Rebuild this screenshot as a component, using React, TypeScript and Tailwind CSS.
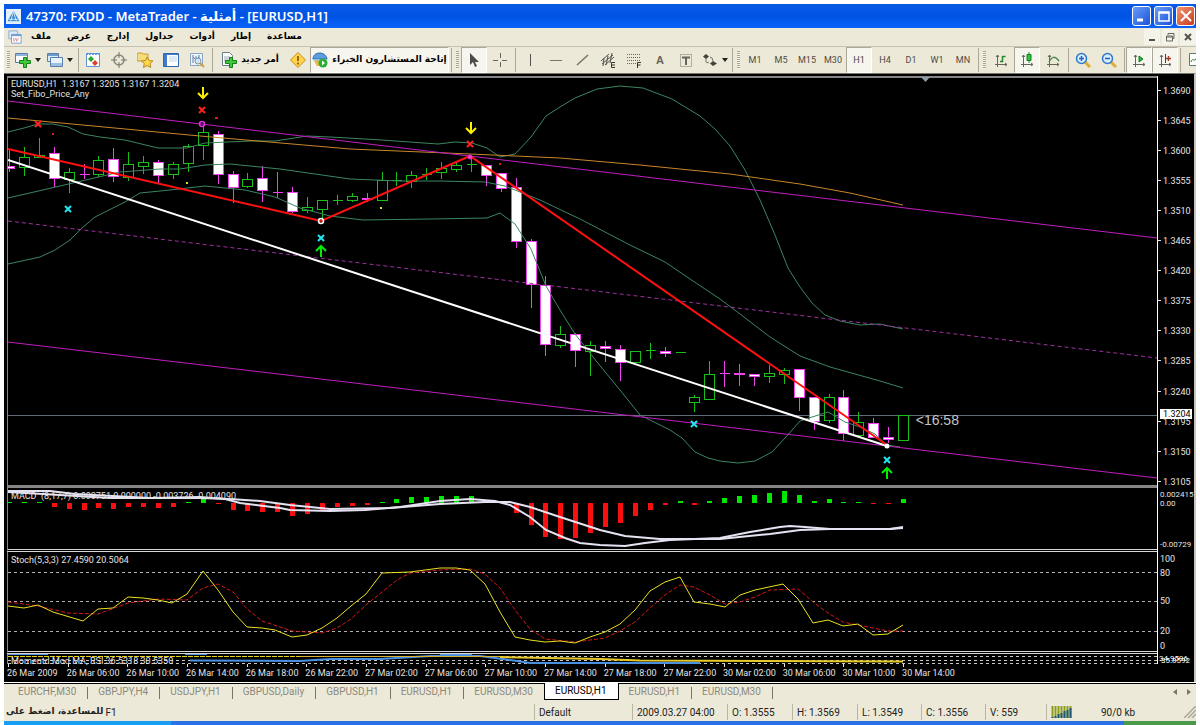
import type { ReactNode } from 'react'
import clsx from 'clsx'

type Side = 'up' | 'down'
// side, high, body top, body bottom, low
type Candle = [Side, number, number, number, number]

const CANDLES: Candle[] = [
  ['down', 150, 166, 168, 172], ['up', 147, 157, 167, 176], ['up', 138, 155, 157, 157], ['down', 147, 153, 178, 187],
  ['up', 168, 172, 179, 193], ['down', 164, 174, 174, 179], ['up', 156, 160, 174, 177], ['down', 148, 159, 176, 182],
  ['up', 152, 164, 177, 181], ['up', 156, 162, 166, 174], ['down', 160, 162, 175, 184], ['up', 162, 164, 174, 179],
  ['up', 144, 146, 163, 172], ['up', 125, 132, 145, 160], ['down', 131, 134, 174, 184], ['down', 171, 174, 187, 203],
  ['up', 173, 179, 186, 188], ['down', 166, 178, 190, 202], ['down', 172, 192, 192, 198], ['down', 187, 192, 211, 213],
  ['up', 197, 207, 210, 213], ['up', 200, 200, 209, 220], ['up', 195, 200, 200, 205], ['up', 193, 196, 200, 202],
  ['down', 193, 198, 199, 202], ['up', 172, 180, 200, 200], ['up', 172, 180, 180, 186], ['up', 171, 175, 181, 188],
  ['up', 168, 174, 174, 180], ['up', 162, 168, 172, 179], ['up', 163, 165, 169, 172], ['up', 158, 164, 164, 172],
  ['down', 165, 165, 175, 186], ['down', 173, 173, 188, 192], ['down', 178, 187, 241, 248], ['down', 239, 241, 284, 308],
  ['down', 276, 285, 344, 356], ['up', 326, 334, 345, 348], ['down', 333, 334, 350, 367], ['up', 341, 345, 351, 376],
  ['down', 341, 346, 348, 362], ['down', 345, 349, 362, 381], ['up', 351, 351, 362, 362], ['up', 343, 350, 350, 359],
  ['down', 347, 351, 353, 357], ['up', 352, 352, 352, 352], ['up', 395, 397, 402, 412], ['up', 361, 374, 399, 399],
  ['down', 361, 373, 373, 387], ['down', 364, 373, 374, 386], ['down', 374, 374, 376, 386], ['up', 365, 373, 376, 383],
  ['up', 368, 370, 374, 384], ['down', 369, 369, 397, 411], ['down', 397, 397, 421, 430], ['up', 394, 397, 420, 423],
  ['down', 390, 397, 433, 441], ['up', 412, 422, 435, 435], ['down', 418, 423, 437, 437], ['down', 427, 437, 439, 443],
  ['up', 415, 415, 440, 440],
]

const MACD_ZERO = 503
// end of each histogram bar; below the zero line is red
const MACD_BARS = [
  502, 502, 502, 507, 509, 510, 508, 509, 507, 507, 508, 507, 502, 498, 504, 510, 511, 512, 512, 516, 514, 511, 507, 506,
  505, 502, 499, 497, 497, 496, 496, 496, 503, 503, 513, 525, 537, 539, 538, 533, 527, 523, 516, 510, 505, 501, 505, 501,
  498, 496, 495, 493, 491, 495, 501, 499, 502, 502, 504, 504, 499,
]

const UPPER_BAND = '8,132 24,128 38,124 53,124 68,127 83,134 100,137 125,140 158,148 187,148 205,143 250,141 275,141 307,136 330,137 382,140 438,144 455,142 472,143 487,148 500,157 515,154 531,137 546,116 560,107 575,98 597,89 620,86 643,88 672,99 700,116 715,129 730,146 745,170 760,200 775,235 788,268 800,287 812,303 825,315 840,321 860,325 880,324 903,329'
const MIDDLE_BAND = '8,198 60,186 120,172 160,169 180,169 205,165 230,164 280,169 350,179 400,181 440,181 485,182 505,186 540,200 580,219 630,245 665,262 690,279 720,299 740,314 770,337 800,356 830,367 880,381 903,388'
const LOWER_BAND = '8,264 40,257 55,250 70,240 82,228 95,217 125,202 140,193 170,190 205,186 245,190 275,197 300,208 330,216 363,220 430,219 487,218 500,213 515,224 531,249 546,286 560,310 575,334 597,362 620,390 640,415 670,430 682,438 695,452 708,458 720,461 738,463 755,461 772,452 785,438 800,421 812,417 828,412 845,422 860,427 875,434 887,445 900,447'
const SLOW_MA = '8,118 200,136 350,149 470,154 560,158 640,165 730,174 800,184 850,193 903,205'
const MACD_MAIN = '8,491 50,491 75,494 150,498 200,497 225,499 240,503 280,508 290,510 330,511 365,510 400,507 440,501 470,499 495,501 510,505 530,517 546,530 565,538 580,543 600,545 625,546 645,543 670,540 720,538 750,532 780,527 790,526 805,527 830,529 890,529 903,527'
const MACD_SIGNAL = '8,492 60,495 110,498 200,498 230,499 260,501 290,505 330,509 390,508 440,504 485,502 510,502 530,507 560,517 600,530 625,536 660,539 720,539 770,534 800,530 830,529 890,529 903,528'
const STOCH_K = '8,606 24,608 38,605 53,612 83,621 98,609 113,608 128,597 143,598 158,600 172,603 187,594 203,571 218,590 233,612 247,627 262,628 275,630 292,637 307,635 322,628 337,618 351,606 366,594 382,573 410,572 440,568 456,568 470,570 485,584 500,612 515,637 530,640 545,642 560,641 575,643 590,637 605,632 620,624 635,610 650,591 665,582 680,577 694,602 710,604 725,607 740,595 755,590 783,584 798,599 813,623 828,620 843,626 858,624 873,635 888,634 903,625'
const STOCH_D = '8,602 38,606 68,613 98,614 128,603 158,599 187,600 203,588 218,584 233,592 247,609 262,621 292,631 322,633 337,628 351,619 366,605 382,592 397,580 410,573 440,570 470,569 485,574 500,588 515,610 530,629 545,639 575,642 605,638 620,631 635,622 650,608 665,595 680,585 694,587 710,595 725,604 740,602 755,597 770,590 798,589 813,602 828,613 843,622 873,628 888,631 903,631'

const PRICES = ['1.3690', '1.3645', '1.3600', '1.3555', '1.3510', '1.3465', '1.3420', '1.3375', '1.3330', '1.3285', '1.3240', '1.3195', '1.3150', '1.3105']
const TIMES = ['26 Mar 2009', '26 Mar 06:00', '26 Mar 10:00', '26 Mar 14:00', '26 Mar 18:00', '26 Mar 22:00', '27 Mar 02:00', '27 Mar 06:00', '27 Mar 10:00', '27 Mar 14:00', '27 Mar 18:00', '27 Mar 22:00', '30 Mar 02:00', '30 Mar 06:00', '30 Mar 10:00', '30 Mar 14:00']
const MENU = ['ملف', 'عرض', 'إدارج', 'جداول', 'أدوات', 'إطار', 'مساعدة']
const TIMEFRAMES = ['M1', 'M5', 'M15', 'M30', 'H1', 'H4', 'D1', 'W1', 'MN']
const TABS = ['EURCHF,M30', 'GBPJPY,H4', 'USDJPY,H1', 'GBPUSD,Daily', 'GBPUSD,H1', 'EURUSD,H1', 'EURUSD,M30', 'EURUSD,H1', 'EURUSD,H1', 'EURUSD,M30']
const ACTIVE_TAB = 7

const candleX = (i: number) => Math.round(9 + i * 14.9)

/* ---------- toolbar ---------- */

function Icon({ children, size = 'w-4' }: { children: ReactNode; size?: string }) {
  return (
    <svg viewBox="0 0 16 16" className={clsx('h-4 shrink-0', size)} fill="none" aria-hidden="true">
      {children}
    </svg>
  )
}

function Tool({ label, pressed, width = 'w-[26px]', children }: { label: string; pressed?: boolean; width?: string; children: ReactNode }) {
  return (
    <button
      aria-label={label}
      className={clsx(
        'flex h-[26px] shrink-0 items-center justify-center gap-1 border',
        width,
        pressed ? 'border-[#aca899] border-r-white border-b-white bg-[#f6f5ee]' : 'border-transparent',
      )}
    >
      {children}
    </button>
  )
}

function Sep() {
  return (
    <div className="flex w-1 shrink-0 justify-center py-px">
      <div className="h-full w-px bg-[#aca899]" />
    </div>
  )
}

function Grip() {
  return (
    <div className="flex w-2 shrink-0 justify-center py-1">
      <div className="h-full w-[3px] bg-[repeating-linear-gradient(#a8a593_0_1px,#f4f2e8_1px_2px)]" />
    </div>
  )
}

function Caret() {
  return (
    <svg viewBox="0 0 6 4" className="h-1 w-1.5 shrink-0" aria-hidden="true">
      <path d="M0 0h6L3 4z" fill="#222" />
    </svg>
  )
}

const AXES = <path d="M4.5 3v12M2 12.500h12M3 5l1.500-2L6 5M12 11l2 1.500-2 1.500" stroke="#66645c" />

function Toolbar() {
  return (
    <div className="flex h-[27px] items-center overflow-hidden border-t border-[#c5c2b4] bg-[#ece9d8]" role="toolbar">
      <div className="flex h-full shrink-0 items-stretch">
        <Grip />
        <Tool label="New chart" width="w-8">
          <Icon>
            <path d="M.5 1.500h12v9H.5z" fill="#fff" stroke="#5a7fa8" />
            <path d="M1 2h11v2H1z" fill="#8fb4dc" />
            <path d="M8.500 5.500h3v3h4v3h-4v4h-3v-4h-4v-3h4z" fill="#3fc83a" stroke="#14801a" />
          </Icon>
          <Caret />
        </Tool>
        <Tool label="Profiles" width="w-8">
          <Icon>
            <path d="M.5 1.500h11v8H.5z" fill="#dcebfa" stroke="#5a7fa8" />
            <path d="M1 2h10v2H1z" fill="#6b9bd0" />
            <path d="M3.500 5.500h12v9h-12z" fill="#e9f3fc" stroke="#5a7fa8" />
            <path d="M4 11h11v3H4z" fill="#9bbfe4" />
          </Icon>
          <Caret />
        </Tool>
        <Sep />
        <Tool label="Market watch">
          <Icon>
            <path d="M1.500 1.500h13v13h-13z" fill="#fff" stroke="#5c96dc" />
            <path d="M1 2h14" stroke="#5c96dc" strokeWidth="2" strokeDasharray="2 1" />
            <path d="M6 4l3 3-3 3-3-3z" fill="#2aa52a" />
            <path d="M10 8l3 3-3 3-3-3z" fill="#e0402a" />
          </Icon>
        </Tool>
        <Tool label="Data window">
          <Icon>
            <circle cx="8" cy="8" r="5" stroke="#8a877c" strokeWidth="1.5" />
            <path d="M8 0v6M8 10v6M0 8h6M10 8h6" stroke="#77746a" />
          </Icon>
        </Tool>
        <Tool label="Navigator">
          <Icon>
            <path d="M0 2l1-1h4l1 1h5v7H0z" fill="#f4dc7c" stroke="#c79a2c" />
            <path d="M10 5l2 3.500 4 .5-3 2.500.8 4L10 13.500 6.500 15.500l.8-4L4.500 9l4-.5z" fill="#ffd84a" stroke="#b98a1c" />
          </Icon>
        </Tool>
        <Tool label="Terminal">
          <Icon>
            <path d="M.5 1.500h15v13H.5z" fill="#fff" stroke="#2f66b0" />
            <path d="M1 2h14v1H1zM1 2h3v12H1z" fill="#3f7ccc" />
            <path d="M6 5h8M6 7h8M6 9h8" stroke="#bcd3ee" />
          </Icon>
        </Tool>
        <Tool label="Strategy tester">
          <Icon>
            <path d="M1.500 1.500h12v12h-12z" fill="#eef4fb" stroke="#8ba6c4" />
            <path d="M4 3v8M7 4v7M10 3v8M4 5l3 3 3-3" stroke="#5f7fa5" />
            <circle cx="9" cy="9" r="3" fill="#cfe5fa" stroke="#7b94b2" />
            <path d="M11 11l4 4" stroke="#d0a030" strokeWidth="2" />
          </Icon>
        </Tool>
        <Sep />
        <Tool label="أمر جديد" width="w-[72px]">
          <Icon>
            <path d="M1.500.5h7l3 3v10h-10z" fill="#fff" stroke="#6d7d8c" />
            <path d="M3 5h6M3 7h5M3 9h3" stroke="#9aa9b8" />
            <path d="M8.500 5.500h3v3h4v3h-4v4h-3v-4h-4v-3h4z" fill="#3fc83a" stroke="#14801a" />
          </Icon>
          <span className="font-['DejaVu_Sans',sans-serif] text-[9px] font-bold whitespace-nowrap">أمر جديد</span>
        </Tool>
        <Tool label="MetaEditor" width="w-6">
          <Icon>
            <path d="M8 .5L15.500 8 8 15.500.5 8z" fill="#ffd24a" stroke="#c78d12" />
            <path d="M8 4v5M8 10.500v2" stroke="#7a4a00" strokeWidth="1.5" />
          </Icon>
        </Tool>
        <Tool label="إتاحة المستشارون الخبراء" pressed width="w-[139px]">
          <Icon>
            <path d="M1 7c0-8 13-8 14 0z" fill="#5d9ee0" stroke="#2d68ac" />
            <path d="M0 7h16l-3 2H3z" fill="#8cc0f0" />
            <path d="M2 9c2-1 5-1 7 1l-1 4H5z" fill="#e8b848" />
            <circle cx="11" cy="11" r="4.500" fill="#2cae34" />
            <path d="M10 8.500v5l3-2.500z" fill="#fff" />
          </Icon>
          <span className="font-['DejaVu_Sans',sans-serif] text-[9px] font-bold whitespace-nowrap">إتاحة المستشارون الخبراء</span>
        </Tool>
      </div>
      <div className="flex h-full shrink-0 items-stretch">
        <Sep />
        <Grip />
        <Tool label="Cursor" pressed>
          <Icon><path d="M4 1v12l3-3 2 5 2-1-2-4h4z" fill="#4c4c4a" /></Icon>
        </Tool>
        <Tool label="Crosshair">
          <Icon><path d="M8.500 1v5M8.500 10v5M1 8.500h5M10 8.500h5" stroke="#66645c" /></Icon>
        </Tool>
        <Sep />
        <Tool label="Vertical line">
          <Icon><path d="M8.500 2v12" stroke="#55534c" /></Icon>
        </Tool>
        <Tool label="Horizontal line">
          <Icon><path d="M2 8.500h12" stroke="#77746a" /></Icon>
        </Tool>
        <Tool label="Trendline">
          <Icon><path d="M3 13L14 3" stroke="#77746a" strokeWidth="1.5" /></Icon>
        </Tool>
        <Tool label="Channel">
          <Icon>
            <path d="M1 9l8-7M2 12L13 3M5 13l9-8M4 6l-1 8M8 4L6 13M12 1l-2 10" stroke="#55534c" />
            <path d="M15 10.500h-3.500v5H15M12 13h3" stroke="#333" />
          </Icon>
        </Tool>
        <Tool label="Fibonacci">
          <Icon>
            <path d="M1 2.500h13M1 5.500h13M1 8.500h13M1 11.500h9" stroke="#66645c" strokeDasharray="1 1" />
            <path d="M15 10.500h-3.500V16M12 13h2.500" stroke="#333" />
          </Icon>
        </Tool>
        <Tool label="Text"><span className="font-['Liberation_Sans',sans-serif] text-[11px] font-bold text-[#66645c]">A</span></Tool>
        <Tool label="Text label">
          <Icon>
            <path d="M2.500 2.500h11v12h-11z" stroke="#77746a" strokeDasharray="1 1" />
            <path d="M4 5.500h8M8 5v8" stroke="#66645c" strokeWidth="2" />
          </Icon>
        </Tool>
        <Tool label="Arrows" width="w-[31px]">
          <Icon>
            <path d="M4 2l3 2.500L4 7 1 4.500zM11 9l4 2.500-4 2.500-3-2.500z" fill="#44423c" />
            <path d="M4 6v4l3 1M8 5l2 1 1 3" stroke="#77746a" />
          </Icon>
          <Caret />
        </Tool>
      </div>
      <div className="flex h-full shrink-0 items-stretch">
        <Sep />
        <Grip />
        {TIMEFRAMES.map((t) => (
          <Tool key={t} label={t} pressed={t === 'H1'}>
            <span className="pt-0.5 text-[9px] text-[#4c4a44]">{t}</span>
          </Tool>
        ))}
      </div>
      <div className="flex h-full shrink-0 items-stretch">
        <Sep />
        <Grip />
        <Tool label="Bar chart">
          <Icon>{AXES}<path d="M9.500 10V4M9.500 4.500h3M7 9.500h3" stroke="#1f8a2a" strokeWidth="1.5" /></Icon>
        </Tool>
        <Tool label="Candlesticks" pressed>
          <Icon>{AXES}<path d="M10 0v11" stroke="#1f8a2a" /><path d="M8 2.500h4v6H8z" fill="#30c83c" stroke="#127a1c" /></Icon>
        </Tool>
        <Tool label="Line chart">
          <Icon>{AXES}<path d="M4 10c3-6 6-6 10-1" stroke="#4e8a50" strokeWidth="1.5" /></Icon>
        </Tool>
        <Sep />
        <Tool label="Zoom in">
          <Icon>
            <path d="M10 10l5 5" stroke="#dcae32" strokeWidth="3" />
            <circle cx="6.5" cy="6.5" r="5" fill="#d9edff" stroke="#2f78cc" strokeWidth="1.5" />
            <path d="M4 6.500h5M6.500 4v5" stroke="#1d63b8" strokeWidth="1.5" />
          </Icon>
        </Tool>
        <Tool label="Zoom out">
          <Icon>
            <path d="M10 10l5 5" stroke="#dcae32" strokeWidth="3" />
            <circle cx="6.5" cy="6.5" r="5" fill="#d9edff" stroke="#2f78cc" strokeWidth="1.5" />
            <path d="M4 6.500h5" stroke="#1d63b8" strokeWidth="1.5" />
          </Icon>
        </Tool>
        <Sep />
        <Tool label="Auto scroll" pressed>
          <Icon>{AXES}<path d="M8 4l4 3-4 3z" fill="#2eae3a" stroke="#14801a" /></Icon>
        </Tool>
        <Tool label="Chart shift" pressed>
          <Icon>{AXES}<path d="M8.500 2v9" stroke="#44423c" /><path d="M9 6.500h5M11.500 4v5" stroke="#a0402a" strokeWidth="1.5" /></Icon>
        </Tool>
        <Sep />
        <Tool label="Indicators">
          <Icon><path d="M2.500 1.500h10v12h-10z" fill="#fff" stroke="#5f7a6a" /><path d="M4 10c2-6 3 2 6-5" stroke="#1f8a2a" /></Icon>
        </Tool>
      </div>
    </div>
  )
}

/* ---------- chart ---------- */

function Cross({ x, y, color }: { x: number; y: number; color: string }) {
  return <path d={`M${x - 3} ${y - 3}l6 6M${x + 3} ${y - 3}l-6 6`} stroke={color} strokeWidth="2" />
}

function Arrow({ x, y, up }: { x: number; y: number; up?: boolean }) {
  const d = up ? `M${x} ${y + 6}v-11M${x - 5} ${y}l5 -5l5 5` : `M${x} ${y - 6}v11M${x - 5} ${y}l5 5l5 -5`
  return <path d={d} stroke={up ? '#00f000' : '#fff000'} strokeWidth="2" />
}

function PriceChart() {
  return (
    <svg viewBox="8 76 1149 409" preserveAspectRatio="none" className="block h-[409px] w-full" fill="none" aria-label="EURUSD,H1">
      <path d="M8 77h1149" stroke="#858585" strokeWidth="2" />
      <path d="M921 77h9l-4.500 5z" fill="#8c9ba8" />
      <path d="M8 415.500h1149" stroke="#5f6b78" />

      <g shapeRendering="crispEdges">
        {CANDLES.map(([side, high, top, bottom, low], i) => {
          const x = candleX(i)
          const up = side === 'up'
          return (
            <g key={i} stroke={up ? '#18c018' : '#f040f0'}>
              {low > high && <path d={`M${x + 0.5} ${high}V${low}`} />}
              {bottom - top < 1 ? (
                <path d={`M${x - 4} ${top + 0.5}h10`} />
              ) : (
                <rect x={x - 4.5} y={top + 0.5} width={10} height={bottom - top} fill={up ? '#000' : '#fff'} />
              )}
            </g>
          )
        })}
      </g>

      <g stroke="#3c8562">
        <polyline points={UPPER_BAND} />
        <polyline points={MIDDLE_BAND} />
        <polyline points={LOWER_BAND} />
      </g>
      <polyline points={SLOW_MA} stroke="#c8862a" />
      <path d="M8 101L1157 238M8 342L1157 478" stroke="#c01ec0" />
      <path d="M8 221L1157 358" stroke="#a030a0" strokeDasharray="4 3" />
      <path d="M8 160L887 446" stroke="#fff" strokeWidth="2" />
      <path d="M8 149L321 221L470 156L887 445" stroke="#ff1010" strokeWidth="2" />

      <circle cx="202" cy="124" r="2.5" stroke="#e030e0" strokeWidth="1.5" />
      <circle cx="470" cy="157" r="2" fill="#ff40c0" stroke="#e030e0" />
      <circle cx="321" cy="221" r="2.5" stroke="#fff" strokeWidth="1.5" />
      <circle cx="887" cy="446" r="2.5" fill="#fff" />

      <Arrow x={203} y={93} />
      <Arrow x={471} y={128} />
      <Arrow x={321} y={251} up />
      <Arrow x={887} y={473} up />
      <Cross x={202} y={110} color="#ff2020" />
      <Cross x={38} y={124} color="#ff2020" />
      <Cross x={470} y={144} color="#ff2020" />
      <Cross x={68} y={209} color="#20e8f0" />
      <Cross x={321} y={238} color="#20e8f0" />
      <Cross x={694} y={424} color="#20e8f0" />
      <Cross x={887} y={460} color="#20e8f0" />
      <path d="M215 117h3v2h-3zM52 133h2v2h-2zM499 163h2v2h-2z" fill="#e01818" />
      <path d="M186 182h2v2h-2zM380 207h2v2h-2z" fill="#b8f020" />
    </svg>
  )
}

function MacdChart() {
  return (
    <svg viewBox="8 488 1149 61" preserveAspectRatio="none" className="block h-[61px] w-full" fill="none" aria-label="MACD">
      <g shapeRendering="crispEdges">
        {MACD_BARS.map((end, i) => (
          <rect
            key={i}
            x={candleX(i) - 2}
            y={Math.min(end, MACD_ZERO)}
            width={5}
            height={Math.abs(end - MACD_ZERO)}
            fill={end > MACD_ZERO ? '#f81010' : '#00e800'}
          />
        ))}
      </g>
      <polyline points={MACD_MAIN} stroke="#e6e2f2" strokeWidth="2" />
      <polyline points={MACD_SIGNAL} stroke="#e6e2f2" strokeWidth="2" />
    </svg>
  )
}

function StochChart() {
  return (
    <svg viewBox="8 552 1149 99" preserveAspectRatio="none" className="block h-[99px] w-full" fill="none" aria-label="Stochastic">
      <path d="M8 572.500h1149M8 601.500h1149M8 631.500h1149" stroke="#b0b0b0" strokeDasharray="3 3" />
      <polyline points={STOCH_D} stroke="#d81818" strokeDasharray="4 2" />
      <polyline points={STOCH_K} stroke="#e8e020" />
    </svg>
  )
}

function MomentumChart() {
  return (
    <svg viewBox="8 654 1149 10" preserveAspectRatio="none" className="block h-[10px] w-full" fill="none" aria-label="RSI">
      <path d="M8 656.500h1149M8 660.500h1149M8 663.500h1149" stroke="#c8c8c8" strokeDasharray="3 3" />
      <path d="M8 654.500h40M185 654.500h22M440 654.500h32" stroke="#5a96e0" />
      <path d="M190 660.500L300 661L330 659L380 659L430 656L480 656L510 660L530 663L700 663" stroke="#4a90e0" strokeWidth="2" />
      <path d="M300 656.500h200" stroke="#d8b030" />
      <path d="M8 656.500h292" stroke="#e0d020" strokeDasharray="5 1" />
      <path d="M500 657L600 659L640 660.500L903 661.500" stroke="#e8c828" strokeWidth="2" />
    </svg>
  )
}

function Panel({ title, divider, plot, axis }: { title?: ReactNode; divider?: string; plot: ReactNode; axis: ReactNode }) {
  return (
    <section className="flex">
      <div className={clsx('relative min-w-0 flex-1 border-l border-l-[#858585]', divider)}>
        {plot}
        {title}
      </div>
      <div className="w-[37px] shrink-0 border-l border-white">{axis}</div>
    </section>
  )
}

function Chart() {
  return (
    <main className="border-t border-r-2 border-t-[#77756c] border-r-[#c8c6bc] bg-black pt-0.5 pl-[3px] text-[9px] leading-[10px] text-[#e4e4e4]">
      <Panel
        divider="border-b-[3px] border-b-[#858585]"
        plot={<PriceChart />}
        title={
          <>
            <p className="absolute top-[3px] left-[3px] whitespace-pre">
              {'EURUSD,H1  1.3167 1.3205 1.3167 1.3204\nSet_Fibo_Price_Any'}
            </p>
            <p className="absolute top-[336px] left-[79%] font-['Liberation_Sans',sans-serif] text-sm leading-4 text-[#c4c4c4]">&lt;16:58</p>
          </>
        }
        axis={
          <svg viewBox="0 76 36 409" className="block h-[409px] w-9 overflow-visible" fill="#e4e4e4">
            {PRICES.map((p, i) => (
              <g key={p}>
                <path d={`M0 ${Math.round(90 + i * 30.05)}h3v1h-3z`} />
                <text x="5" y={Math.round(94 + i * 30.05)}>{p}</text>
              </g>
            ))}
            <path d="M2 409h32v10h-32z" fill="#fff" />
            <text x="5" y="417" fill="#000">1.3204</text>
          </svg>
        }
      />
      <Panel
        divider="border-b-[3px] border-double border-b-[#d8d8d8]"
        plot={<MacdChart />}
        title={<p className="absolute top-[3px] left-[3px] whitespace-pre">{'MACD  (8,17,7) 0.000751 0.000000 -0.003726 -0.004090'}</p>}
        axis={
          <svg viewBox="0 488 36 64" className="block h-[64px] w-9 overflow-visible text-[8px]" fill="#e4e4e4">
            <text x="2" y="497">0.002415</text>
            <text x="2" y="506">0.00</text>
            <text x="2" y="547">-0.00729</text>
          </svg>
        }
      />
      <Panel
        divider="border-b-[3px] border-double border-b-[#d8d8d8]"
        plot={<StochChart />}
        title={<p className="absolute top-[3px] left-[3px]">Stoch(5,3,3) 27.4590 20.5064</p>}
        axis={
          <svg viewBox="0 552 36 102" className="block h-[102px] w-9 overflow-visible" fill="#e4e4e4">
            <text x="2" y="562">100</text>
            <text x="2" y="576">80</text>
            <text x="2" y="604">50</text>
            <text x="2" y="634">20</text>
            <text x="2" y="649">0</text>
          </svg>
        }
      />
      <Panel
        plot={<MomentumChart />}
        title={<p className="absolute top-0.5 left-[3px] whitespace-nowrap">Momentd Mod MA, RSI 36.5318 30.5350</p>}
        axis={
          <svg viewBox="0 654 36 10" className="block h-[10px] w-9 overflow-visible text-[8px]" fill="#fff">
            <text x="1" y="661">34.9596</text>
            <text x="3" y="663">35.8592</text>
          </svg>
        }
      />
      <div className="flex h-[18px] pr-[37px]">
        {TIMES.map((t) => (
          <div key={t} className="w-[5.19%] shrink-0 whitespace-nowrap">
            <div className="ml-px h-[3px] w-px bg-[#e4e4e4]" />
            <p className="pt-px">{t}</p>
          </div>
        ))}
      </div>
    </main>
  )
}

/* ---------- window ---------- */

function CaptionButton({ label, red, children }: { label: string; red?: boolean; children: ReactNode }) {
  return (
    <button
      aria-label={label}
      className={clsx(
        'flex h-5 w-[19px] items-center justify-center rounded-[3px] border border-white',
        red ? 'bg-linear-to-br from-[#f0936c] to-[#c8381a]' : 'bg-linear-to-br from-[#6a9cf8] to-[#1c4fd8]',
      )}
    >
      <Icon>{children}</Icon>
    </button>
  )
}

function StatusCell({ width, children }: { width: string; children: ReactNode }) {
  return <div className={clsx('flex shrink-0 items-center border-l border-[#b8b5a4] pl-1 whitespace-nowrap', width)}>{children}</div>
}

export default function App() {
  return (
    <div className="min-h-screen bg-white px-1 pt-1 font-[Roboto,'DejaVu_Sans',sans-serif] text-[10px] text-black">
      <header className="flex h-6 items-center gap-[5px] bg-linear-to-b from-[#0a5ae6] via-[#0054e3] to-[#0a62fa] pr-px pl-0.5">
        <svg viewBox="0 0 16 16" className="h-[15px] w-[15px]" aria-hidden="true">
          <path d="M0 0h16v16H0z" fill="#e4f1fb" />
          <path d="M8 2l6.500 11h-13z" fill="#2f86cc" />
          <path d="M3 11h10M8 3L5 13M8 3l3 10M1 14h14" stroke="#d6eaf8" fill="none" />
        </svg>
        <h1 className="flex-1 font-['Noto_Sans','DejaVu_Sans',sans-serif] text-[13px] leading-5 font-semibold whitespace-nowrap text-white">
          47370: FXDD - MetaTrader - أمثلية - [EURUSD,H1]
        </h1>
        <div className="flex gap-[3px]">
          <CaptionButton label="Minimize"><path d="M3 12h6" stroke="#fff" strokeWidth="3" /></CaptionButton>
          <CaptionButton label="Maximize"><path d="M3 4h10v9H3zM3 5h10" stroke="#fff" strokeWidth="1.5" /></CaptionButton>
          <CaptionButton label="Close" red><path d="M3 3l10 10M13 3L3 13" stroke="#fff" strokeWidth="2" /></CaptionButton>
        </div>
      </header>

      <nav className="flex h-[18px] items-center bg-[#ece9d8] pl-1">
        <Icon size="w-[14px]">
          <path d="M1 1h10v9H1z" fill="#dcebfa" stroke="#7fa6d0" />
          <path d="M4 5h11v10H4z" fill="#fff" stroke="#6b9bd0" />
          <path d="M4 5h11v2H4z" fill="#6b9bd0" />
          <path d="M6 9l1 4 2-4 1 4 2-4" stroke="#e09090" />
        </Icon>
        <div className="flex flex-1 gap-4 pl-[9px] font-['DejaVu_Sans',sans-serif] text-[9px] font-bold">
          {MENU.map((m) => (
            <button key={m}>{m}</button>
          ))}
        </div>
        <div className="flex gap-0.5">
          <button aria-label="Minimize chart" className="h-4 w-4 bg-[#f4f3ea]"><Icon><path d="M5 11h6" stroke="#55534c" strokeWidth="2" /></Icon></button>
          <button aria-label="Restore chart" className="h-4 w-4 bg-[#f4f3ea]"><Icon><path d="M6 6V4.500h6v5h-1.500M4.500 7h6v5h-6zM4.500 8h6" stroke="#66645c" /></Icon></button>
          <button aria-label="Close chart" className="h-4 w-4 bg-[#f4f3ea]"><Icon><path d="M5 5l6 6M11 5l-6 6" stroke="#55534c" strokeWidth="2" /></Icon></button>
        </div>
      </nav>

      <Toolbar />
      <Chart />

      <div className="mt-px flex h-5 items-start border-t border-black bg-[#ece9d8]" role="tablist">
        {TABS.map((t, i) => (
          <div key={i} className="flex shrink-0 items-start">
            <button
              role="tab"
              aria-selected={i === ACTIVE_TAB}
              className={clsx(
                'pr-[11px] leading-[16px]',
                i === 0 ? 'pl-[14px]' : 'pl-[10px]',
                i === ACTIVE_TAB ? '-mt-px border border-t-0 border-black bg-white' : 'text-[#8c8a7e]',
              )}
            >
              {t}
            </button>
            {i !== ACTIVE_TAB && i !== ACTIVE_TAB - 1 && <span className="mt-[3px] h-3 w-px bg-[#77756a]" />}
          </div>
        ))}
        <div className="ml-auto flex gap-2 pr-1 text-[#77756a]">
          <button aria-label="Scroll tabs left"><svg viewBox="0 0 6 8" className="h-4 w-1.5"><path d="M5 1v6L1 4z" fill="currentColor" /></svg></button>
          <button aria-label="Scroll tabs right"><svg viewBox="0 0 6 8" className="h-4 w-1.5"><path d="M1 1v6l4-3z" fill="currentColor" /></svg></button>
        </div>
      </div>

      <footer>
        <div className="flex h-[18px] bg-[#ece9d8] py-px text-[#222]">
          <div className="flex min-w-0 flex-1 items-center pl-0.5 font-bold whitespace-nowrap">
            <span className="font-['DejaVu_Sans',sans-serif] text-[9px]">للمساعدة، اضغط على</span>
            <span className="pl-0.5 font-normal">F1</span>
          </div>
          <StatusCell width="w-[98px]">Default</StatusCell>
          <StatusCell width="w-[95px]">2009.03.27 04:00</StatusCell>
          <StatusCell width="w-[65px]">O: 1.3555</StatusCell>
          <StatusCell width="w-[65px]">H: 1.3569</StatusCell>
          <StatusCell width="w-[64px]">L: 1.3549</StatusCell>
          <StatusCell width="w-[64px]">C: 1.3556</StatusCell>
          <StatusCell width="w-[61px]">V: 559</StatusCell>
          <StatusCell width="w-[150px]">
            <svg viewBox="0 0 22 12" className="h-3 w-[22px]" aria-hidden="true">
              <path d="M1.500 0v12M4.500 0v12M7.500 0v12M10.500 0v12M13.500 0v12M16.500 0v12M19.500 0v12" stroke="#8c9c1c" strokeWidth="2" />
              <path d="M1.500 11v1M4.500 10v2M7.500 8v4M10.500 7v5M13.500 5v7M16.500 4v8M19.500 2v10" stroke="#1f5878" strokeWidth="2" />
            </svg>
            <span className="pl-7">90/0 kb</span>
            <svg viewBox="0 0 12 12" className="ml-auto h-3 w-3" aria-hidden="true">
              <path d="M0 12L12 0M4 12l8-8M8 12l4-4" stroke="#aca899" strokeWidth="1.5" />
            </svg>
          </StatusCell>
        </div>
        <div className="flex h-1">
          <div className="w-[14%] bg-[#1a9cf0]" />
          <div className="flex-1 bg-[#2a72e6]" />
          <div className="w-[6%] bg-[#4a9a4c]" />
        </div>
      </footer>
    </div>
  )
}
